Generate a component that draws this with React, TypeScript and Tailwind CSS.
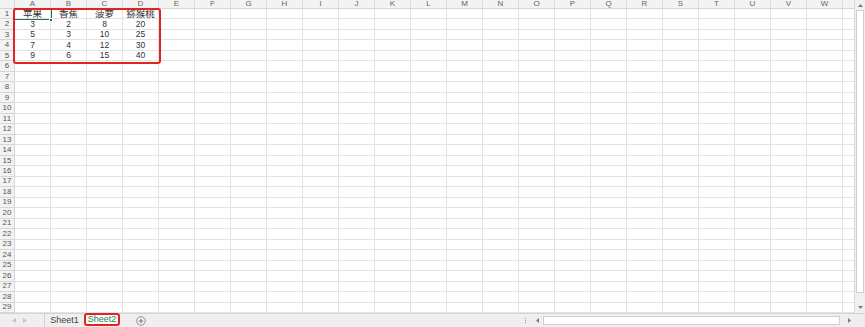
import { Fragment } from "react";

const COLS = "ABCDEFGHIJKLMNOPQRSTUVW".split("");
const ROWS = Array.from({ length: 29 }, (_, i) => i + 1);

const DATA: Record<number, string[]> = {
	1: ["苹果", "香蕉", "菠萝", "猕猴桃"],
	2: ["3", "2", "8", "20"],
	3: ["5", "3", "10", "25"],
	4: ["7", "4", "12", "30"],
	5: ["9", "6", "15", "40"],
};

const FONT = { fontFamily: '"Liberation Sans", "Noto Sans CJK SC", sans-serif' };

function HeaderRow() {
	return (
		<div className="flex h-[9px] shrink-0 bg-[#f3f3f3] border-b border-[#d6d6d6]">
			<div className="w-[15px] shrink-0 border-r border-[#d6d6d6]" />
			{COLS.map((c) => (
				<div
					key={c}
					className="w-[36px] shrink-0 border-r border-[#dcdcdc] flex items-center justify-center text-[8px] leading-none text-[#666]"
				>
					{c}
				</div>
			))}
			<div className="flex-1" />
		</div>
	);
}

function Row({ n }: { n: number }) {
	const values = DATA[n] ?? [];
	const cjk = n === 1;
	return (
		<div className="flex flex-1 min-h-0">
			<div className="w-[15px] shrink-0 bg-[#f3f3f3] border-r border-b border-[#d6d6d6] flex items-center justify-center text-[8px] leading-none text-[#555]">
				{n}
			</div>
			{COLS.map((c, i) => (
				<div
					key={c}
					className={
						cjk
							? "w-[36px] shrink-0 border-r border-b border-[#e3e3e3] flex items-center justify-center text-[9.5px] leading-none text-[#333]"
							: "w-[36px] shrink-0 border-r border-b border-[#e3e3e3] flex items-center justify-center text-[8.5px] leading-none text-[#333]"
					}
				>
					{values[i] ?? ""}
				</div>
			))}
			<div className="flex-1 border-b border-[#e3e3e3]" />
		</div>
	);
}

function VScroll() {
	return (
		<div className="w-[11px] shrink-0 bg-[#f0f0f0] border-l border-[#dadada] flex flex-col items-center py-[2px]">
			<div className="h-[7px] w-full flex items-center justify-center">
				<svg width="5" height="3" viewBox="0 0 5 3">
					<path d="M0 3 L2.5 0 L5 3 Z" fill="#7a7a7a" />
				</svg>
			</div>
			<div className="mt-[1px] h-[283px] w-[8px] bg-white border border-[#d0d0d0]" />
			<div className="flex-1" />
			<div className="h-[7px] w-full flex items-center justify-center">
				<svg width="5" height="3" viewBox="0 0 5 3">
					<path d="M0 0 L5 0 L2.5 3 Z" fill="#7a7a7a" />
				</svg>
			</div>
		</div>
	);
}

function TabBar() {
	return (
		<div className="h-[14px] shrink-0 bg-[#efefef] border-t border-[#d4d4d4] flex items-stretch text-[9px] leading-none">
			<div className="w-[45px] shrink-0 flex items-center gap-[7px] pl-[12px] border-r border-[#d2d2d2]">
				<svg width="4" height="5" viewBox="0 0 4 5">
					<path d="M4 0 L0 2.5 L4 5 Z" fill="#c4c4c4" />
				</svg>
				<svg width="4" height="5" viewBox="0 0 4 5">
					<path d="M0 0 L4 2.5 L0 5 Z" fill="#c4c4c4" />
				</svg>
			</div>
			<div className="w-[39px] shrink-0 flex items-center justify-center text-[#444]">Sheet1</div>
			<div className="w-[36px] shrink-0 -mt-[1px] flex items-center justify-center bg-white text-[#2a7d4f] border-2 border-[#e32222] rounded-[3px] mb-[1px]">
				Sheet2
			</div>
			<div className="w-[41px] shrink-0 flex items-center justify-center">
				<svg width="10" height="10" viewBox="0 0 10 10">
					<circle cx="5" cy="5" r="4.3" fill="none" stroke="#8a8a8a" strokeWidth="0.9" />
					<path d="M5 2.8 V7.2 M2.8 5 H7.2" stroke="#6e6e6e" strokeWidth="0.9" />
				</svg>
			</div>
			<div className="flex-1" />
			<div className="w-[14px] shrink-0 flex flex-col items-center justify-center gap-[1px]">
				<div className="w-[1px] h-[1px] bg-[#9a9a9a]" />
				<div className="w-[1px] h-[1px] bg-[#9a9a9a]" />
				<div className="w-[1px] h-[1px] bg-[#9a9a9a]" />
			</div>
			<div className="w-[333px] shrink-0 flex items-center pr-[11px]">
				<div className="w-[11px] flex items-center justify-center">
					<svg width="3" height="5" viewBox="0 0 3 5">
						<path d="M3 0 L0 2.5 L3 5 Z" fill="#7a7a7a" />
					</svg>
				</div>
				<div className="h-[9px] w-[297px] bg-white border border-[#cfcfcf]" />
				<div className="flex-1" />
				<div className="w-[9px] flex items-center justify-center">
					<svg width="3" height="5" viewBox="0 0 3 5">
						<path d="M0 0 L3 2.5 L0 5 Z" fill="#7a7a7a" />
					</svg>
				</div>
			</div>
		</div>
	);
}

export default function App() {
	return (
		<div className="w-[865px] h-[327px] bg-white flex flex-col overflow-hidden relative" style={FONT}>
			<div className="flex h-[313px] shrink-0">
				<div className="flex-1 flex flex-col relative min-w-0">
					<HeaderRow />
					{ROWS.map((n) => (
						<Fragment key={n}>
							<Row n={n} />
						</Fragment>
					))}
					{/* active cell A1 */}
					<div className="absolute left-[14px] top-[8px] w-[38px] h-[12px] border border-[#217346] pointer-events-none" />
					<div className="absolute left-[49px] top-[18px] w-[4px] h-[4px] bg-[#217346] border border-white pointer-events-none" />
					{/* highlight box */}
					<div className="absolute left-[13px] top-[8px] w-[148px] h-[56px] border-2 border-[#e32222] rounded-[3px] pointer-events-none" />
				</div>
				<VScroll />
			</div>
			<TabBar />
		</div>
	);
}
